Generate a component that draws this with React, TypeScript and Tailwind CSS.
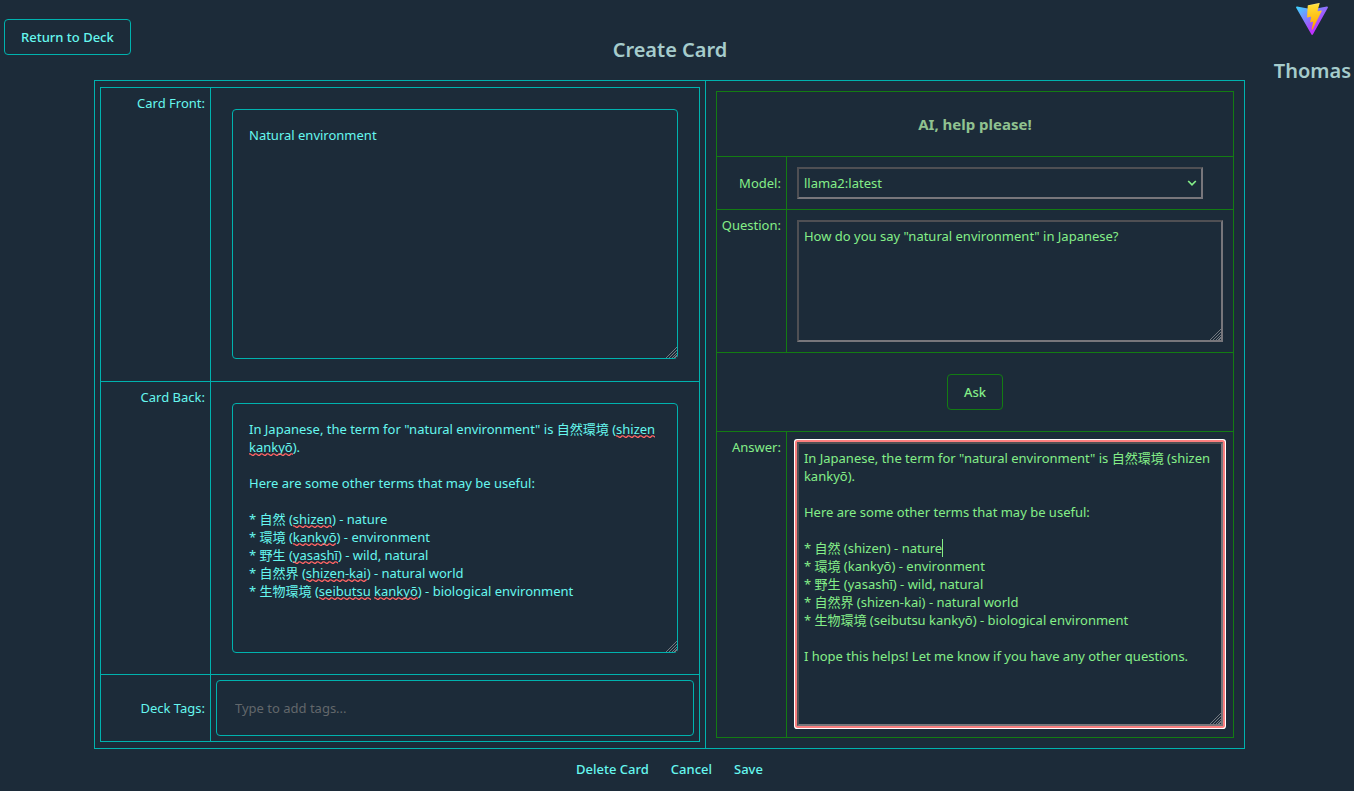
import type { ReactNode } from 'react';

const BACK_TEXT = `In Japanese, the term for "natural environment" is 自然環境 (shizen kankyō).

Here are some other terms that may be useful:

* 自然 (shizen) - nature
* 環境 (kankyō) - environment
* 野生 (yasashī) - wild, natural
* 自然界 (shizen-kai) - natural world
* 生物環境 (seibutsu kankyō) - biological environment`;

const ANSWER_TEXT = `${BACK_TEXT}

I hope this helps! Let me know if you have any other questions.`;

const LINE_HEIGHT = 18;

/* Words the spelling checker flags, by line and extent within the text. */
const MISSPELLED = [
  { line: 0, left: 367, width: 39 },
  { line: 1, left: 0, width: 44 },
  { line: 5, left: 44, width: 39 },
  { line: 6, left: 44, width: 43 },
  { line: 7, left: 44, width: 45 },
  { line: 8, left: 57, width: 61 },
  { line: 9, left: 70, width: 52 },
  { line: 9, left: 125, width: 44 },
];

const CARET = { line: 5, left: 138 };

function ViteLogo() {
  return (
    <svg className="size-8" viewBox="0 0 256 257" role="img" aria-label="Vite">
      <defs>
        <linearGradient id="shield" x1="-.828%" x2="57.636%" y1="7.652%" y2="78.411%">
          <stop offset="0%" stopColor="#41D1FF" />
          <stop offset="100%" stopColor="#BD34FE" />
        </linearGradient>
        <linearGradient id="bolt" x1="43.376%" x2="50.316%" y1="2.242%" y2="89.03%">
          <stop offset="0%" stopColor="#FFEA83" />
          <stop offset="8.333%" stopColor="#FFDD35" />
          <stop offset="100%" stopColor="#FFA800" />
        </linearGradient>
      </defs>
      <path
        fill="url(#shield)"
        d="M255.153 37.938L134.897 252.976c-2.483 4.44-8.862 4.466-11.382.048L.875 37.958c-2.746-4.814 1.371-10.646 6.827-9.67l120.385 21.517a6.537 6.537 0 0 0 2.322-.004l117.867-21.483c5.438-.991 9.574 4.796 6.877 9.62Z"
      />
      <path
        fill="url(#bolt)"
        d="M185.432.063L96.44 17.501a3.268 3.268 0 0 0-2.634 3.014l-5.474 92.456a3.268 3.268 0 0 0 3.997 3.378l24.777-5.718c2.318-.535 4.413 1.507 3.936 3.838l-7.361 36.047c-.495 2.426 1.782 4.5 4.151 3.78l15.304-4.649c2.372-.72 4.652 1.36 4.15 3.788l-11.698 56.621c-.732 3.542 3.979 5.473 5.943 2.437l1.313-2.028l72.516-144.72c1.215-2.423-.88-5.186-3.54-4.672l-25.505 4.922c-2.396.462-4.435-1.77-3.759-4.114l16.646-57.705c.677-2.35-1.37-4.583-3.769-4.113Z"
      />
    </svg>
  );
}

function Squiggle({ line, left, width }: { line: number; left: number; width: number }) {
  const id = `wave-${line}-${left}`;
  return (
    <svg
      className="pointer-events-none absolute h-[3px]"
      style={{ left, width, top: (line + 1) * LINE_HEIGHT - 3 }}
      aria-hidden="true"
    >
      <defs>
        <pattern id={id} width="6" height="3" patternUnits="userSpaceOnUse">
          <path d="M-1 1.5 L0 0.8 L1 0.8 L3.5 2.3 L4.5 2.3 L6 0.8 L7 0.8" fill="none" stroke="#ff6464" strokeWidth="1.3" />
        </pattern>
      </defs>
      <rect width="100%" height="3" fill={`url(#${id})`} />
    </svg>
  );
}

function Row({
  id,
  label,
  tone,
  className = '',
  children,
}: {
  id: string;
  label: string;
  tone: string;
  className?: string;
  children: ReactNode;
}) {
  return (
    <div className={`flex border-b last:border-b-0 ${tone} ${className}`}>
      <div className={`flex shrink-0 justify-end border-r px-[5px] ${tone}`}>
        <label htmlFor={id} className="pt-[6px]">
          {label}
        </label>
      </div>
      {children}
    </div>
  );
}

const grip =
  '[&::-webkit-resizer]:bg-[linear-gradient(135deg,#1c2b39_62%,transparent_62%),repeating-linear-gradient(135deg,#1c2b39_0_1px,#737980_1px_2px)]';
const cardArea = `block h-[250px] w-full resize rounded border border-[#00b2ae] bg-transparent p-4 outline-none ${grip}`;
const aiBox =
  'border-2 border-t-[#4f4f53] border-l-[#4f4f53] border-r-[#77767b] border-b-[#77767b] bg-transparent';

export default function App() {
  return (
    <div className="min-h-screen bg-[#1c2b39] font-['Noto_Sans','Noto_Sans_CJK_JP',sans-serif] text-[13px] leading-[18px] text-[#66f7ef]">
      <header className="grid h-20 grid-cols-[1fr_auto_1fr] items-start pr-[3px] pl-1">
        <div className="pt-[19px]">
          <button className="h-9 rounded border border-[#00b2ae] px-4 font-medium">Return to Deck</button>
        </div>
        <h1 className="pt-9 pr-[15px] text-[20px] leading-7 font-semibold text-[#a6cccc]">Create Card</h1>
        <div className="flex flex-col items-center justify-self-end pt-[3px]">
          <ViteLogo />
          <h2 className="pt-[22px] text-[20px] leading-7 font-semibold text-[#a6cccc]">Thomas</h2>
        </div>
      </header>

      <main className="pr-[109px] pl-[94px]">
        <div className="grid grid-cols-[612fr_539fr] border border-[#00b2ae]">
          <section className="border-r border-[#00b2ae] px-[5px] py-1.5">
            <div className="flex h-full flex-col border border-[#00b2ae] [&>div>div:first-child]:w-[110px]">
              <Row id="front" label="Card Front:" tone="border-[#00b2ae]">
                <div className="grow px-[21px] pt-[21px] pb-[22px]">
                  <textarea id="front" className={cardArea} defaultValue="Natural environment" />
                </div>
              </Row>
              <Row id="back" label="Card Back:" tone="border-[#00b2ae]">
                <div className="grow p-[21px]">
                  <div className="relative">
                    <textarea id="back" spellCheck={false} className={cardArea} defaultValue={BACK_TEXT} />
                    <div className="pointer-events-none absolute inset-[17px]" aria-hidden="true">
                      {MISSPELLED.map((word) => (
                        <Squiggle key={`${word.line}-${word.left}`} {...word} />
                      ))}
                    </div>
                  </div>
                </div>
              </Row>
              <Row
                id="tags"
                label="Deck Tags:"
                tone="border-[#00b2ae]"
                className="grow [&_label]:self-center [&_label]:pt-0"
              >
                <div className="grow p-[5px]">
                  <input
                    id="tags"
                    placeholder="Type to add tags..."
                    className="h-14 w-full rounded border border-[#00b2ae] bg-transparent px-[18px] outline-none placeholder:text-[#62676b]"
                  />
                </div>
              </Row>
            </div>
          </section>

          <section className="p-2.5 text-[#84ee88]">
            <div className="flex h-full flex-col border border-[#137c13] [&>div>div:first-child]:w-[70px]">
              <h3 className="border-b border-[#137c13] py-5 text-center text-[15px] leading-6 font-bold text-[#90c290]">
                AI, help please!
              </h3>
              <Row
                id="model"
                label="Model:"
                tone="border-[#137c13]"
                className="[&_label]:self-center [&_label]:pt-0"
              >
                <div className="relative grow p-2.5 pr-[30px]">
                  <select id="model" className={`block h-8 w-full appearance-none px-[5px] outline-none ${aiBox}`}>
                    <option>llama2:latest</option>
                  </select>
                  <svg
                    className="pointer-events-none absolute top-[22px] right-9 h-2 w-[10px]"
                    viewBox="0 0 10 8"
                    fill="none"
                    stroke="currentColor"
                    strokeWidth="1.7"
                    aria-hidden="true"
                  >
                    <path d="M1.2 2 L5 5.8 L8.8 2" />
                  </svg>
                </div>
              </Row>
              <Row id="question" label="Question:" tone="border-[#137c13]">
                <div className="grow p-2.5">
                  <textarea
                    id="question"
                    className={`block h-[122px] w-full resize p-[5px] outline-none ${grip} ${aiBox}`}
                    defaultValue={'How do you say "natural environment" in Japanese?'}
                  />
                </div>
              </Row>
              <section className="border-b border-[#137c13] py-[21px] text-center">
                <button className="h-9 rounded border border-[#137c13] px-4 font-medium">Ask</button>
              </section>
              <Row id="answer" label="Answer:" tone="border-[#137c13]" className="grow">
                <div className="grow px-2.5 pt-2.5 pb-[11px]">
                  <div className="relative">
                    <textarea
                      id="answer"
                      spellCheck={false}
                      className={`block h-[284px] w-full resize rounded-[1px] p-[5px] shadow-[0_0_0_2px_#fb7f7f,0_0_0_3px_#ffffff] outline-none ${grip} ${aiBox}`}
                      defaultValue={ANSWER_TEXT}
                    />
                    <div className="pointer-events-none absolute inset-[7px]" aria-hidden="true">
                      <span
                        className="absolute h-[18px] w-px bg-[#84ee88]"
                        style={{ left: CARET.left, top: CARET.line * LINE_HEIGHT }}
                      />
                    </div>
                  </div>
                </div>
              </Row>
            </div>
          </section>
        </div>
      </main>

      <footer className="flex justify-center gap-[22px] pt-[11px] pr-[15px] font-medium">
        <button>Delete Card</button>
        <button>Cancel</button>
        <button>Save</button>
      </footer>
    </div>
  );
}
